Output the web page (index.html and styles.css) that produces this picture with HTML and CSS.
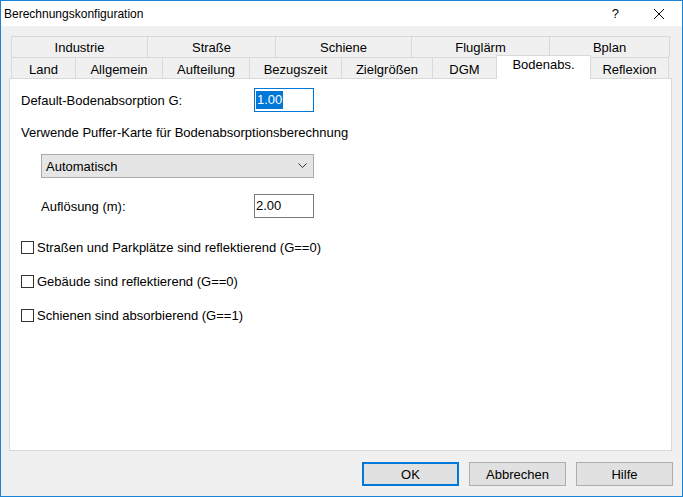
FILE: index.html
```html
<!DOCTYPE html>
<html lang="de">
<head>
    <meta charset="UTF-8">
    <title>Berechnungskonfiguration</title>
    <link rel="stylesheet" href="styles.css">
</head>
<body>
    <div class="window">
        <div class="titlebar">
            <span class="title">Berechnungskonfiguration</span>
            <span class="help">?</span>
            <svg class="close" width="12" height="12" viewBox="0 0 12 12">
                <path d="M1 1 L11 11 M11 1 L1 11" stroke="#000" stroke-width="1" fill="none"/>
            </svg>
        </div>

        <div class="tabs">
            <div class="tab-row row-top">
                <div class="tab" style="width:136px">Industrie</div>
                <div class="tab" style="width:128px">Straße</div>
                <div class="tab" style="width:136px">Schiene</div>
                <div class="tab" style="width:138px">Fluglärm</div>
                <div class="tab last" style="width:121px">Bplan</div>
            </div>
            <div class="tab-row row-bottom">
                <div class="tab" style="width:64px">Land</div>
                <div class="tab" style="width:87px">Allgemein</div>
                <div class="tab" style="width:87px">Aufteilung</div>
                <div class="tab" style="width:92px">Bezugszeit</div>
                <div class="tab" style="width:91px">Zielgrößen</div>
                <div class="tab" style="width:64px">DGM</div>
                <div class="tab active" style="width:95px">Bodenabs.</div>
                <div class="tab last" style="width:79px">Reflexion</div>
            </div>
        </div>

        <div class="panel">
            <div class="field-row first">
                <label>Default-Bodenabsorption G:</label>
                <div class="textbox focused"><span class="selected">1.00</span></div>
            </div>

            <p class="caption">Verwende Puffer-Karte für Bodenabsorptionsberechnung</p>

            <div class="indent">
                <div class="combo">
                    <span>Automatisch</span>
                    <svg width="9" height="6" viewBox="0 0 9 6">
                        <polyline points="0.5,0.5 4.5,4.5 8.5,0.5" stroke="#333" stroke-width="1" fill="none"/>
                    </svg>
                </div>
                <div class="field-row">
                    <label>Auflösung (m):</label>
                    <div class="textbox">2.00</div>
                </div>
            </div>

            <div class="checks">
                <div class="check"><span class="box"></span>Straßen und Parkplätze sind reflektierend (G==0)</div>
                <div class="check"><span class="box"></span>Gebäude sind reflektierend (G==0)</div>
                <div class="check"><span class="box"></span>Schienen sind absorbierend (G==1)</div>
            </div>
        </div>

        <div class="buttons">
            <button class="default">OK</button>
            <button>Abbrechen</button>
            <button>Hilfe</button>
        </div>
    </div>
</body>
</html>
```

FILE: styles.css
```css
body {
    margin: 0;
    padding: 0;
    font-family: "Liberation Sans", Arial, sans-serif;
    font-size: 13px;
    color: #000;
    background-color: #fff;
}

.window {
    width: 683px;
    height: 497px;
    box-sizing: border-box;
    border: 1px solid #1883d7;
    background-color: #f0f0f0;
    display: flex;
    flex-direction: column;
}

/* title bar */
.titlebar {
    height: 25px;
    background-color: #fff;
    display: flex;
    align-items: center;
    padding-left: 3px;
}

.title {
    font-size: 12px;
    flex: 1;
}

.help {
    font-size: 13px;
    margin-right: 34px;
}

.close {
    margin-right: 17px;
}

/* tabs */
.tabs {
    margin: 10px 0 0 10px;
}

.tab-row {
    display: flex;
    height: 21px;
    align-items: flex-end;
}

.tab {
    height: 21px;
    box-sizing: border-box;
    border-top: 1px solid #d9d9d9;
    border-left: 1px solid #d9d9d9;
    display: flex;
    align-items: center;
    justify-content: center;
    padding-top: 1px;
}

.row-bottom .tab {
    padding-top: 2px;
}

.tab.last {
    border-right: 1px solid #d9d9d9;
}

.row-bottom .tab.active {
    position: relative;
    z-index: 1;
    height: 24px;
    margin-bottom: -1px;
    background-color: #fff;
    border-right: 1px solid #d9d9d9;
    margin-right: -1px;
    padding-top: 0;
    padding-bottom: 7px;
}

/* page contents */
.panel {
    margin-left: 8px;
    width: 663px;
    height: 373px;
    box-sizing: border-box;
    border: 1px solid #d9d9d9;
    background-color: #fff;
    padding: 9px 0 0 11px;
}

.field-row {
    display: flex;
    align-items: center;
    justify-content: space-between;
    width: 293px;
    height: 24px;
}

.textbox {
    width: 60px;
    height: 24px;
    box-sizing: border-box;
    border: 1px solid #7a7a7a;
    padding: 2px 1px;
    line-height: 18px;
}

.textbox.focused {
    border-color: #0078d7;
}

.selected {
    background-color: #0078d7;
    color: #fff;
    display: inline-block;
    padding: 0 1px;
}

.caption {
    margin: 13px 0 0 0;
}

.indent {
    padding-left: 20px;
}

.indent .field-row {
    width: 273px;
    margin-top: 16px;
}

.combo {
    margin-top: 14px;
    width: 273px;
    height: 24px;
    box-sizing: border-box;
    border: 1px solid #acacac;
    background-color: #e5e5e5;
    display: flex;
    align-items: center;
    justify-content: space-between;
    padding: 0 6px 0 4px;
}

.checks {
    margin-top: 22px;
    display: flex;
    flex-direction: column;
    gap: 20px;
}

.check {
    display: flex;
    align-items: center;
    height: 14px;
}

.box {
    width: 13px;
    height: 13px;
    box-sizing: border-box;
    border: 1px solid #333;
    background-color: #fff;
    margin-right: 3px;
}

/* dialog buttons */
.buttons {
    display: flex;
    justify-content: flex-end;
    gap: 10px;
    margin-top: 11px;
    padding-right: 9px;
}

button {
    width: 97px;
    height: 24px;
    box-sizing: border-box;
    border: 1px solid #adadad;
    background-color: #e1e1e1;
    font-family: "Liberation Sans", Arial, sans-serif;
    font-size: 13px;
    color: #000;
    padding: 0;
}

button.default {
    border: 2px solid #0078d7;
}
```
